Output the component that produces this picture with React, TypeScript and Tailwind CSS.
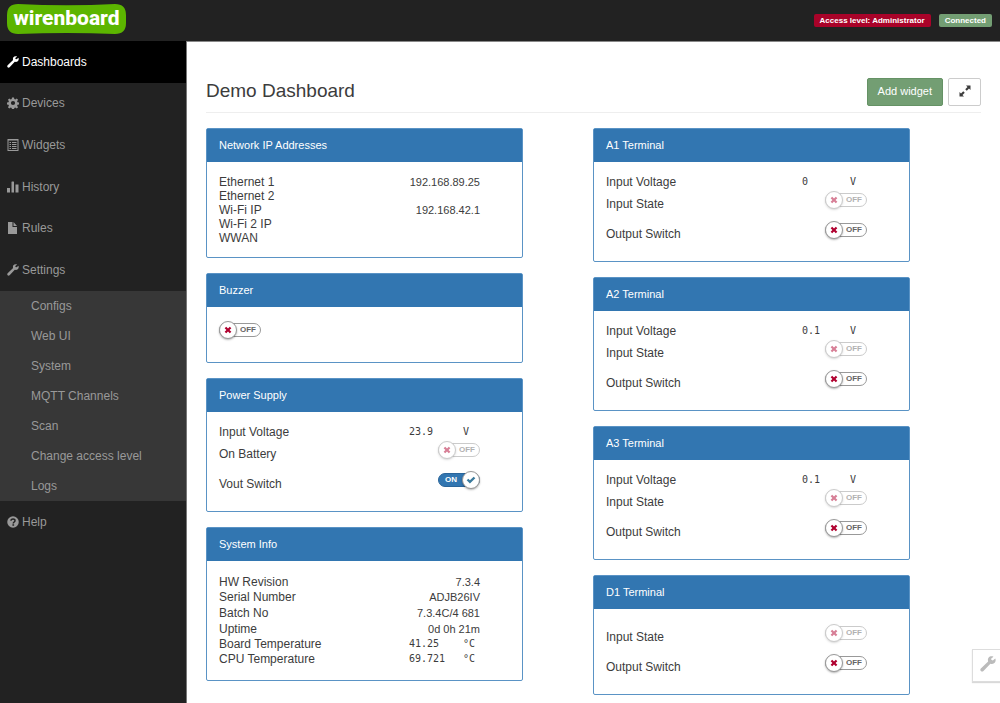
import React, { useState } from "react";

type IconProps = { className?: string };

const WrenchIcon = ({ className = "size-3" }: IconProps) => (
  <svg viewBox="0 0 24 24" className={className} fill="currentColor" aria-hidden="true">
    <path d="M22.9 3.6 19.2 6.6 17 5.8 16.6 4.1 20.2 1C17.6-.2 14.400.4 12.800 2.600 11.600 4.300 11.600 6.300 12.200 8.100L1.300 18.600C.2 19.700.2 21.400 1.300 22.500 2.400 23.600 4.100 23.600 5.200 22.500L15.600 11.700C17.600 12.300 19.900 12 21.500 10.600 23.500 8.900 24 6 22.900 3.600Z" />
  </svg>
);

const CogIcon = ({ className = "size-3" }: IconProps) => (
  <svg viewBox="0 0 24 24" className={className} fill="currentColor" aria-hidden="true">
    <path
      fillRule="evenodd"
      d="M10 .8h4l.6 3.300 2 .8 2.800-1.900 2.700 2.700-1.900 2.800.8 2 3.200.6v3.800l-3.200.6-.8 2 1.900 2.800-2.700 2.700-2.800-1.900-2 .8-.6 3.300h-4l-.6-3.300-2-.8-2.800 1.900-2.700-2.700 1.900-2.800-.8-2-3.200-.6v-3.800l3.200-.6.8-2-1.900-2.800 2.700-2.700 2.800 1.900 2-.8zM12 7.800a4.200 4.200 0 1 0 0 8.400 4.200 4.200 0 0 0 0-8.400z"
    />
  </svg>
);

const ListIcon = ({ className = "size-3" }: IconProps) => (
  <svg viewBox="0 0 24 24" className={className} fill="currentColor" aria-hidden="true">
    <path fillRule="evenodd" d="M1 0h22v24H1zM3 3v19h18V3z" />
    <path d="M5 6h3v2H5zM10 6h9v2h-9zM5 10h3v2H5zM10 10h9v2h-9zM5 14h3v2H5zM10 14h9v2h-9zM5 18h3v2H5zM10 18h9v2h-9z" />
  </svg>
);

const StatsIcon = ({ className = "size-3" }: IconProps) => (
  <svg viewBox="0 0 24 24" className={className} fill="currentColor" aria-hidden="true">
    <path d="M0 14h6v9H0zM9 2q0-1 1-1h3q1 0 1 1v21H9zM17 7h6v16h-6z" />
  </svg>
);

const FileIcon = ({ className = "size-3" }: IconProps) => (
  <svg viewBox="0 0 24 24" className={className} fill="currentColor" aria-hidden="true">
    <path d="M2 0h9v10h9v14H2zM13 0l7 8h-7z" />
  </svg>
);

const HelpIcon = ({ className = "size-3" }: IconProps) => (
  <svg viewBox="0 0 24 24" className={className} aria-hidden="true">
    <circle cx="12" cy="12" r="11.500" fill="currentColor" />
    <path d="M8 9.500C8 4.500 16.500 5 16 9.500c-.2 2.500-3.500 2.500-3.500 5.500" fill="none" stroke="#222" strokeWidth="3" />
    <path d="M10.800 16.500h3.400v3h-3.400z" fill="#222" />
  </svg>
);

const ExpandIcon = ({ className = "size-3" }: IconProps) => (
  <svg viewBox="0 0 24 24" className={className} fill="currentColor" aria-hidden="true">
    <path d="M14 1h9v9l-3-3-4.500 4.500-3-3L17 4zM1 14l3 3 4.500-4.500 3 3L7 20l3 3H1z" />
  </svg>
);

const CrossIcon = () => (
  <svg viewBox="0 0 12 12" className="size-2" fill="currentColor" aria-hidden="true">
    <path d="M3.300 1 6 3.700 8.700 1 11 3.300 8.300 6 11 8.700 8.700 11 6 8.300 3.300 11 1 8.700 3.700 6 1 3.300z" />
  </svg>
);

const CheckIcon = () => (
  <svg viewBox="0 0 12 12" className="size-2.5" fill="currentColor" aria-hidden="true">
    <path d="M.8 6.400 2.800 4.500 4.700 6.300 9.200 2 11.200 3.900 4.700 10.300z" />
  </svg>
);

function Switch({ name, on = false, disabled = false }: { name: string; on?: boolean; disabled?: boolean }) {
  const [checked, setChecked] = useState(on);
  return (
    <label className={`relative flex h-[18px] w-[42px] items-center ${disabled ? "opacity-50" : "cursor-pointer"}`}>
      <input
        type="checkbox"
        className="sr-only"
        aria-label={name}
        checked={checked}
        disabled={disabled}
        onChange={(e) => setChecked(e.target.checked)}
      />
      <span
        className={`flex h-[14px] w-full items-center rounded-full border text-[8px] leading-none font-bold ${
          checked ? "border-[#2a659a] bg-[#3276b1] pl-[6px] text-white" : "justify-end border-[#999] bg-white pr-[4px] text-[#666]"
        }`}
      >
        {checked ? "ON" : "OFF"}
      </span>
      <span
        className={`absolute top-0 flex size-[18px] items-center justify-center rounded-full border border-[#999] bg-white shadow-[0_1px_2px_rgba(0,0,0,0.3)] ${
          checked ? "right-0 text-[#3a7a9c]" : "left-0 text-[#b0002f]"
        }`}
      >
        {checked ? <CheckIcon /> : <CrossIcon />}
      </span>
    </label>
  );
}

function Panel({ title, children }: { title: string; children: React.ReactNode }) {
  return (
    <section className="rounded-[2px] border border-[#5a93c5] bg-white">
      <h2 className="flex h-[33px] items-center bg-[#3276b1] px-3 pb-[2px] text-[11px] text-white">{title}</h2>
      <div className="pt-[13px] pr-[42px] pb-3 pl-3">{children}</div>
    </section>
  );
}

function TextRow({ label, value, className = "" }: { label: string; value?: string; className?: string }) {
  return (
    <div className={`flex items-center justify-between ${className}`}>
      <span>{label}</span>
      <span className="text-[11px]">{value}</span>
    </div>
  );
}

function MeasureRow({ label, value, unit, narrow = false }: { label: string; value: string; unit: string; narrow?: boolean }) {
  return (
    <div className="flex h-[14px] items-center justify-between">
      <span>{label}</span>
      <span className={`flex font-['DejaVu_Sans_Mono',monospace] text-[10px] ${narrow ? "w-[65px]" : "w-[71px]"}`}>
        <span className="flex-1">{value}</span>
        <span className="w-[17px]">{unit}</span>
      </span>
    </div>
  );
}

function SwitchRow({ label, on, disabled }: { label: string; on?: boolean; disabled?: boolean }) {
  return (
    <div className="flex h-[30px] items-start justify-between">
      <span className="leading-[30px]">{label}</span>
      <span className="pt-[2px]">
        <Switch name={label} on={on} disabled={disabled} />
      </span>
    </div>
  );
}

function Terminal({ title, voltage }: { title: string; voltage?: string }) {
  return (
    <Panel title={title}>
      {voltage !== undefined && <MeasureRow label="Input Voltage" value={voltage} unit="V" narrow />}
      <SwitchRow label="Input State" disabled />
      <SwitchRow label="Output Switch" />
    </Panel>
  );
}

const mainNav = [
  { label: "Dashboards", Icon: WrenchIcon },
  { label: "Devices", Icon: CogIcon },
  { label: "Widgets", Icon: ListIcon },
  { label: "History", Icon: StatsIcon },
  { label: "Rules", Icon: FileIcon },
  { label: "Settings", Icon: WrenchIcon },
];

const settingsNav = ["Configs", "Web UI", "System", "MQTT Channels", "Scan", "Change access level", "Logs"];

export default function App() {
  return (
    <div className="flex min-h-screen flex-col bg-white font-['Liberation_Sans',Arial,sans-serif] text-[12px] leading-[14px] text-[#3c3c3c]">
      <header className="flex h-[41px] items-center justify-between bg-[#222] pr-2 pl-[7px]">
        <a href="#home" className="relative mb-[3px] flex h-[30px] w-[119px] items-center justify-center">
          <svg viewBox="0 0 119 30" className="absolute inset-0 size-full" aria-hidden="true">
            <path
              d="M11 0Q60 2.500 108 0Q119 0 119 11V19Q119 30 108 30Q60 28 11 30Q0 30 0 19V11Q0 0 11 0Z"
              fill="#5cb500"
            />
          </svg>
          <span className="relative pb-[2px] font-['Roboto',sans-serif] text-[21px] leading-none font-extrabold text-white">
            wirenboard
          </span>
        </a>
        <div className="flex gap-2 text-[8px] font-bold text-white">
          <span className="flex h-[13px] items-center rounded-[2px] bg-[#a90329] px-[6px]">Access level: Administrator</span>
          <span className="flex h-[13px] items-center rounded-[2px] bg-[#739e73] px-[6px]">Connected</span>
        </div>
      </header>

      <div className="flex flex-1">
        <nav className="w-[187px] shrink-0 border-r border-[#777] bg-[#222] text-[#999]">
          <ul className="grid h-[250px] grid-rows-6">
            {mainNav.map(({ label, Icon }, i) => (
              <li key={label}>
                <a href={`#${label.toLowerCase()}`} className={`flex h-full items-center gap-[3px] pl-[7px] ${i === 0 ? "bg-black text-white" : ""}`}>
                  <Icon />
                  {label}
                </a>
              </li>
            ))}
          </ul>
          <ul className="bg-[#373737]">
            {settingsNav.map((label) => (
              <li key={label}>
                <a href="#settings" className="flex h-[30px] items-center pl-[31px]">
                  {label}
                </a>
              </li>
            ))}
          </ul>
          <a href="#help" className="flex h-[42px] items-center gap-[3px] pl-[7px]">
            <HelpIcon />
            Help
          </a>
        </nav>

        <main className="flex-1 border-t border-[#888] px-[19px] pt-9">
          <div className="flex h-[35px] items-start justify-between border-b border-[#eee]">
            <h1 className="text-[19px] leading-[26px]">Demo Dashboard</h1>
            <div className="flex gap-[5px]">
              <button type="button" className="h-[28px] rounded-[2px] border border-[#659265] bg-[#739e73] px-[10px] pb-[2px] text-[11px] text-white">
                Add widget
              </button>
              <button
                type="button"
                aria-label="Full screen"
                className="flex h-[28px] w-[33px] items-center justify-center rounded-[2px] border border-[#ccc] bg-white pb-[3px]"
              >
                <ExpandIcon />
              </button>
            </div>
          </div>

          <div className="grid grid-cols-2 gap-x-[70px] pt-[15px] pr-[71px]">
            <div className="flex flex-col gap-[15px]">
              <Panel title="Network IP Addresses">
                <TextRow className="h-[14px]" label="Ethernet 1" value="192.168.89.25" />
                <TextRow className="h-[14px]" label="Ethernet 2" />
                <TextRow className="h-[14px]" label="Wi-Fi IP" value="192.168.42.1" />
                <TextRow className="h-[14px]" label="Wi-Fi 2 IP" />
                <TextRow className="h-[14px]" label="WWAN" />
              </Panel>
              <Panel title="Buzzer">
                <div className="h-[30px] pt-px">
                  <Switch name="Buzzer" />
                </div>
              </Panel>
              <Panel title="Power Supply">
                <MeasureRow label="Input Voltage" value="23.9" unit="V" />
                <SwitchRow label="On Battery" disabled />
                <SwitchRow label="Vout Switch" on />
              </Panel>
              <Panel title="System Info">
                <div className="grid h-[94px] grid-rows-6">
                  <TextRow label="HW Revision" value="7.3.4" />
                  <TextRow label="Serial Number" value="ADJB26IV" />
                  <TextRow label="Batch No" value="7.3.4C/4 681" />
                  <TextRow label="Uptime" value="0d 0h 21m" />
                  <MeasureRow label="Board Temperature" value="41.25" unit="°C" />
                  <MeasureRow label="CPU Temperature" value="69.721" unit="°C" />
                </div>
              </Panel>
            </div>
            <div className="flex flex-col gap-[15px]">
              <Terminal title="A1 Terminal" voltage="0" />
              <Terminal title="A2 Terminal" voltage="0.1" />
              <Terminal title="A3 Terminal" voltage="0.1" />
              <Terminal title="D1 Terminal" />
            </div>
          </div>
        </main>
      </div>

      <button
        type="button"
        aria-label="Options"
        className="fixed top-[649px] right-0 flex h-[33px] w-[28px] items-center justify-end border border-r-0 border-[#ddd] bg-white pr-1 pb-1 text-[#bbb] shadow-[0_1px_1px_rgba(0,0,0,0.15)]"
      >
        <WrenchIcon className="size-4" />
      </button>
    </div>
  );
}
